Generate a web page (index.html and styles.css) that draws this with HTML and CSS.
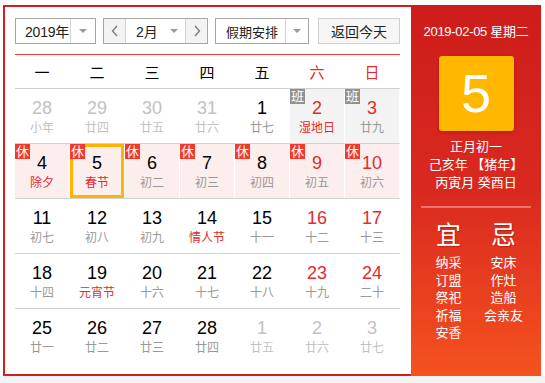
FILE: index.html
```html
<!DOCTYPE html>
<html lang="zh-CN">
<head>
<meta charset="utf-8">
<title>万年历</title>
<link rel="stylesheet" href="styles.css">
</head>
<body>
<div class="calendar">
  <div class="main">
    <div class="toolbar">
      <div class="select year">
        <span class="label">2019年</span>
        <span class="drop"><i class="tri"></i></span>
      </div>
      <div class="select month">
        <span class="nav"><svg width="8" height="12" viewBox="0 0 8 12"><polyline points="6,1 1.5,6 6,11" fill="none" stroke="#777" stroke-width="1.3"/></svg></span>
        <span class="label">2月</span>
        <span class="drop-in"><i class="tri"></i></span>
        <span class="nav"><svg width="8" height="12" viewBox="0 0 8 12"><polyline points="2,1 6.5,6 2,11" fill="none" stroke="#777" stroke-width="1.3"/></svg></span>
      </div>
      <div class="select holiday">
        <span class="label">假期安排</span>
        <span class="drop"><i class="tri"></i></span>
      </div>
      <button class="today">返回今天</button>
    </div>
    <div class="weekhead">
      <span>一</span><span>二</span><span>三</span><span>四</span><span>五</span><span class="we">六</span><span class="we">日</span>
    </div>
    <div class="row">
      <div class="cell other"><b>28</b><small>小年</small></div>
      <div class="cell other"><b>29</b><small>廿四</small></div>
      <div class="cell other"><b>30</b><small>廿五</small></div>
      <div class="cell other"><b>31</b><small>廿六</small></div>
      <div class="cell"><b>1</b><small>廿七</small></div>
      <div class="cell work weekend"><i class="tag ban">班</i><b>2</b><small class="fest">湿地日</small></div>
      <div class="cell work weekend"><i class="tag ban">班</i><b>3</b><small>廿九</small></div>
    </div>
    <div class="row">
      <div class="cell rest"><i class="tag">休</i><b>4</b><small class="fest">除夕</small></div>
      <div class="cell rest selected"><i class="tag">休</i><b>5</b><small class="fest">春节</small></div>
      <div class="cell rest"><i class="tag">休</i><b>6</b><small>初二</small></div>
      <div class="cell rest"><i class="tag">休</i><b>7</b><small>初三</small></div>
      <div class="cell rest"><i class="tag">休</i><b>8</b><small>初四</small></div>
      <div class="cell rest weekend"><i class="tag">休</i><b>9</b><small>初五</small></div>
      <div class="cell rest weekend"><i class="tag">休</i><b>10</b><small>初六</small></div>
    </div>
    <div class="row">
      <div class="cell"><b>11</b><small>初七</small></div>
      <div class="cell"><b>12</b><small>初八</small></div>
      <div class="cell"><b>13</b><small>初九</small></div>
      <div class="cell"><b>14</b><small class="fest">情人节</small></div>
      <div class="cell"><b>15</b><small>十一</small></div>
      <div class="cell weekend"><b>16</b><small>十二</small></div>
      <div class="cell weekend"><b>17</b><small>十三</small></div>
    </div>
    <div class="row">
      <div class="cell"><b>18</b><small>十四</small></div>
      <div class="cell"><b>19</b><small class="fest">元宵节</small></div>
      <div class="cell"><b>20</b><small>十六</small></div>
      <div class="cell"><b>21</b><small>十七</small></div>
      <div class="cell"><b>22</b><small>十八</small></div>
      <div class="cell weekend"><b>23</b><small>十九</small></div>
      <div class="cell weekend"><b>24</b><small>二十</small></div>
    </div>
    <div class="row last">
      <div class="cell"><b>25</b><small>廿一</small></div>
      <div class="cell"><b>26</b><small>廿二</small></div>
      <div class="cell"><b>27</b><small>廿三</small></div>
      <div class="cell"><b>28</b><small>廿四</small></div>
      <div class="cell other"><b>1</b><small>廿五</small></div>
      <div class="cell other"><b>2</b><small>廿六</small></div>
      <div class="cell other"><b>3</b><small>廿七</small></div>
    </div>
  </div>
  <div class="side">
    <div class="date">2019-02-05 星期二</div>
    <div class="bigday">5</div>
    <div class="lunar">
      <p>正月初一</p>
      <p>己亥年 【猪年】</p>
      <p>丙寅月 癸酉日</p>
    </div>
    <div class="divider"></div>
    <div class="yiji">
      <div class="col">
        <h3>宜</h3>
        <p>纳采</p><p>订盟</p><p>祭祀</p><p>祈福</p><p>安香</p>
      </div>
      <div class="col">
        <h3>忌</h3>
        <p>安床</p><p>作灶</p><p>造船</p><p>会亲友</p>
      </div>
    </div>
  </div>
</div>
<div class="footer-band"></div>
</body>
</html>
```

FILE: styles.css
```css
* { box-sizing: border-box; }
html, body { margin: 0; padding: 0; background: #fff; }
body {
  font-family: "Liberation Sans", "Noto Sans CJK SC", sans-serif;
  color: #000;
  padding-top: 5px;
}
.calendar {
  display: flex;
  margin-left: 3px;
  width: 538px;
}
.main {
  width: 408px;
  border: 2px solid #d01f1c;
  border-right: none;
  padding: 11px 11px 11px 10px;
  background: #fff;
}
.toolbar {
  display: flex;
  height: 26px;
  margin-bottom: 10px;
  font-size: 14px;
}
.select {
  display: flex;
  align-items: stretch;
  border: 1px solid #a6a6a6;
  background: #fff;
  color: #222;
}
.select .label {
  display: flex;
  align-items: center;
  white-space: nowrap;
  flex: none;
}
.year { width: 81px; margin-right: 7px; }
.year .label { width: 54px; padding-left: 9px; letter-spacing: -0.2px; }
.drop {
  flex: 1;
  border-left: 1px solid #d4d4d4;
  display: flex;
  align-items: center;
  justify-content: center;
}
.tri {
  display: block;
  width: 0; height: 0;
  border-left: 4px solid transparent;
  border-right: 4px solid transparent;
  border-top: 4px solid #9a9a9a;
}
.month { width: 105px; margin-right: 7px; }
.month .nav {
  width: 22px;
  flex: none;
  background: #f3f3f3;
  display: flex;
  align-items: center;
  justify-content: center;
}
.month .nav:first-child { border-right: 1px solid #d4d4d4; }
.month .nav:last-child { border-left: 1px solid #d4d4d4; }
.month .label { width: 36px; padding-left: 10px; }
.drop-in {
  flex: 1;
  display: flex;
  align-items: center;
  justify-content: center;
}
.holiday { width: 94px; }
.holiday .label { width: 69px; padding-left: 10px; font-size: 13px; }
.today {
  margin-left: auto;
  width: 82px;
  height: 26px;
  border: 1px solid #cfcfcf;
  background: #f6f6f6;
  font: inherit;
  font-size: 14px;
  color: #222;
  padding: 0;
}
.weekhead {
  display: flex;
  gap: 1px;
  border-top: 1px solid #f2463c;
  border-bottom: 1px solid #cfcfcf;
  height: 35px;
  align-items: center;
  font-size: 15px;
}
.weekhead span {
  width: 54px;
  text-align: center;
}
.weekhead .we { color: #e52a2a; }
.row {
  display: flex;
  gap: 1px;
  height: 55px;
  border-bottom: 1px solid #d2d2d2;
}
.row.last { border-bottom: none; height: 54px; }
.cell {
  position: relative;
  width: 54px;
  text-align: center;
  padding-top: 8px;
}
.cell b {
  display: block;
  font-weight: normal;
  font-size: 18px;
  line-height: 22px;
  font-family: "Liberation Sans", Arial, sans-serif;
}
.cell small {
  display: block;
  font-size: 12px;
  line-height: 16px;
  color: #999;
  margin-top: 1px;
}
.cell.weekend b { color: #e52a2a; }
.cell .fest { color: #e52a2a; }
.cell.other b, .cell.other small { color: #c2c2c2; }
.cell.work { background: #f3f3f3; }
.cell.rest { background: #fdeeee; }
.cell.selected { box-shadow: inset 0 0 0 3px #ffb500; }
.tag {
  position: absolute;
  top: 0;
  left: 0;
  width: 15px;
  height: 15px;
  line-height: 15px;
  font-size: 13px;
  font-style: normal;
  color: #fff;
  background: #f3392c;
  text-align: center;
}
.tag.ban { background: #919191; }
.side {
  width: 130px;
  background: linear-gradient(to bottom, #cd1d1b 0%, #d9291f 50%, #f5521f 100%);
  color: #fff;
  padding: 18px 10px 0;
  text-align: center;
}
.date {
  font-size: 13px;
  line-height: 18px;
  white-space: nowrap;
  letter-spacing: -0.3px;
}
.bigday {
  width: 75px;
  height: 75px;
  margin: 15px auto 0;
  background: #ffb700;
  border-radius: 3px;
  box-shadow: 0 1px 3px rgba(120, 0, 0, 0.35);
  font-size: 54px;
  line-height: 75px;
  font-family: "Liberation Sans", Arial, sans-serif;
  color: #fff;
}
.lunar {
  margin-top: 7px;
  font-size: 13px;
  line-height: 18px;
}
.lunar p { margin: 0; white-space: nowrap; }
.divider {
  height: 2px;
  background: rgba(255, 255, 255, 0.35);
  margin-top: 14px;
}
.yiji {
  display: flex;
  margin-top: 12px;
}
.yiji .col { width: 55px; }
.yiji h3 {
  margin: 0 0 4px;
  font-size: 25px;
  line-height: 30px;
  font-weight: normal;
  text-shadow: 1px 1px 1px rgba(120, 0, 0, 0.4);
}
.yiji p {
  margin: 0;
  font-size: 13px;
  line-height: 17.5px;
  white-space: nowrap;
}
.footer-band {
  height: 10px;
  background: #f4f4f4;
}
```
